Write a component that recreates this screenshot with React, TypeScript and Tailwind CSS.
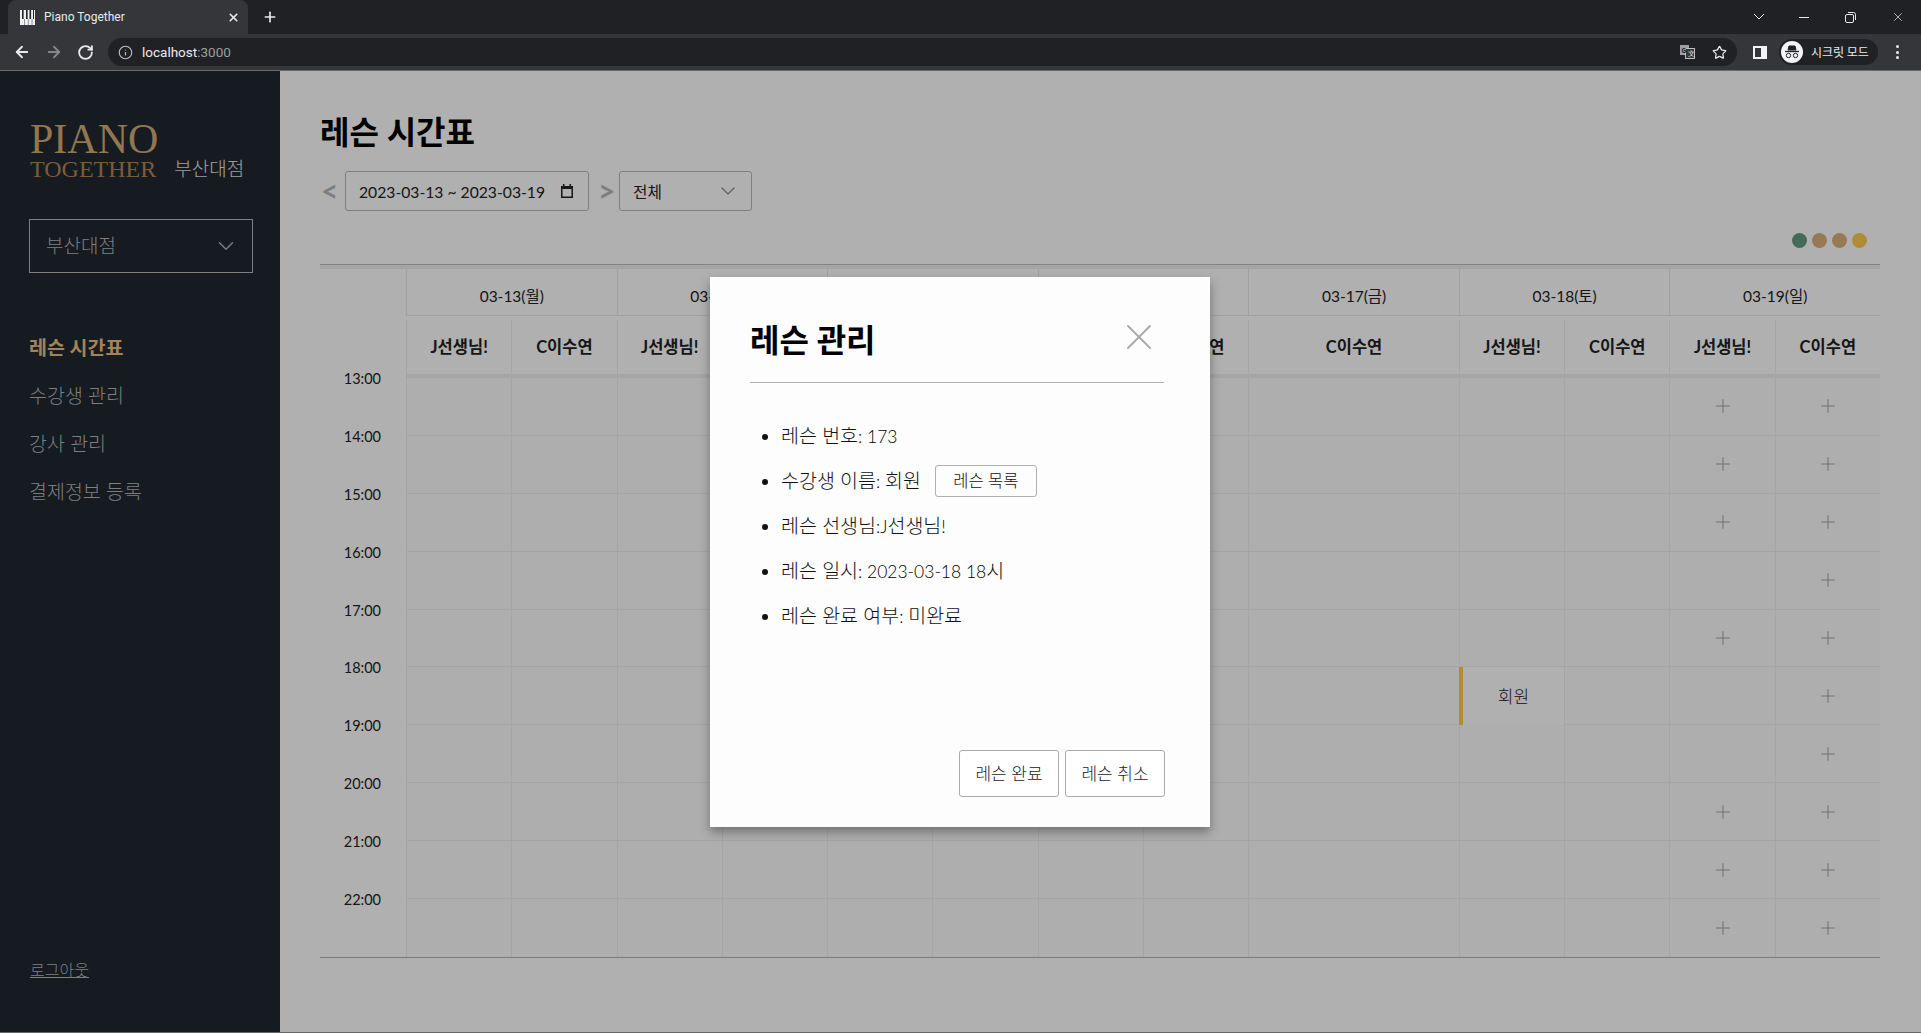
import { ArrowLeft, ArrowRight, ChevronDown, Info, Plus, RotateCw, Star, X } from "lucide-react"

const days = [
  { label: "03-13(월)", teachers: ["J선생님!", "C이수연"] },
  { label: "03-14(화)", teachers: ["J선생님!", "C이수연"] },
  { label: "03-15(수)", teachers: ["J선생님!", "C이수연"] },
  { label: "03-16(목)", teachers: ["J선생님!", "C이수연"] },
  { label: "03-17(금)", teachers: ["C이수연"] },
  { label: "03-18(토)", teachers: ["J선생님!", "C이수연"] },
  { label: "03-19(일)", teachers: ["J선생님!", "C이수연"] },
]

const hours = ["13:00", "14:00", "15:00", "16:00", "17:00", "18:00", "19:00", "20:00", "21:00", "22:00"]
const navItems = ["수강생 관리", "강사 관리", "결제정보 등록"]
const sundayJ = ["13:00", "14:00", "15:00", "17:00", "20:00", "21:00", "22:00"]

function PianoIcon() {
  return (
    <svg width="15" height="15" viewBox="0 0 15 15">
      <rect width="15" height="15" fill="#f1f1f1" />
      <path d="M2 0h1.6v9H2zM6 0h1.6v9H6zM9.5 0h1.6v9H9.5zM13 0h1v9h-1z" fill="#202124" />
      <path d="M4.6 9v6M8.3 9v6M12 9v6" stroke="#777" strokeWidth="0.8" />
    </svg>
  )
}

function BrowserChrome() {
  return (
    <div className="h-[71px] shrink-0 font-['Roboto',sans-serif] text-white">
      <div className="flex h-[34px] items-end bg-[#202124] pl-2">
        <div className="flex h-[34px] w-[240px] items-center rounded-t-lg bg-[#35363a] pl-3 pr-2">
          <PianoIcon />
          <span className="ml-[9px] text-xs text-[#e8eaed]">Piano Together</span>
          <X className="ml-auto h-[13px] w-[13px] text-[#e8eaed]" strokeWidth={3} />
        </div>
        <Plus className="mb-[9px] ml-[14px] h-4 w-4 text-[#e8eaed]" strokeWidth={2.5} />
        <div className="ml-auto flex h-[34px] items-center text-[#e8eaed]">
          <svg width="14" height="8" viewBox="0 0 14 8" fill="none" stroke="currentColor" className="mr-[33px]">
            <path d="M2 1l5 5 5-5" />
          </svg>
          <div className="mr-[36px] h-px w-[10px] bg-[#e8eaed]" />
          <svg width="11" height="11" viewBox="0 0 11 11" fill="none" stroke="currentColor" className="mr-[35px]">
            <rect x="0.5" y="2.5" width="8" height="8" rx="1.5" />
            <path d="M3 0.5h5.5a2 2 0 0 1 2 2V8" />
          </svg>
          <X className="mr-[16px] h-[14px] w-[14px]" strokeWidth={1.2} />
        </div>
      </div>
      <div className="flex h-[37px] items-center border-b border-[#6b6b6b] bg-[#35363a]">
        <ArrowLeft className="ml-[13px] h-[18px] w-[18px] text-[#e8eaed]" strokeWidth={2.4} />
        <ArrowRight className="ml-[14px] h-[18px] w-[18px] text-[#85878a]" strokeWidth={2.4} />
        <RotateCw className="ml-[14px] h-[17px] w-[17px] text-[#e8eaed]" strokeWidth={2.6} />
        <div className="ml-[14px] flex h-[28px] w-[1629px] items-center rounded-full bg-[#202124]">
          <Info className="ml-[10px] h-[15px] w-[15px] text-[#bdc1c6]" strokeWidth={1.8} />
          <span className="ml-[9px] text-[13.5px] text-[#e8eaed]">
            localhost<span className="text-[#9aa0a6]">:3000</span>
          </span>
          <svg width="15" height="14" viewBox="0 0 15 14" className="ml-auto mr-[17px]">
            <rect x="0" y="0" width="9" height="10" fill="#9aa0a6" />
            <rect x="5.5" y="3.5" width="9" height="10" fill="#35363a" stroke="#bdc1c6" />
            <text x="1.5" y="8" fontSize="7" fontWeight="700" fill="#202124">G</text>
            <text x="7.5" y="11" fontSize="7" fill="#e8eaed">文</text>
          </svg>
          <Star className="mr-[10px] h-[15px] w-[15px] text-[#e8eaed]" strokeWidth={2} />
        </div>
        <svg width="14" height="13" viewBox="0 0 14 13" className="ml-[16px]">
          <rect width="14" height="13" fill="#f1f3f4" />
          <rect x="2" y="2" width="6" height="9" fill="#35363a" />
        </svg>
        <div className="ml-[12px] flex h-[26px] w-[99px] items-center rounded-full bg-[#202124] pl-[2px]">
          <div className="flex h-[22px] w-[22px] items-center justify-center rounded-full bg-[#f1f3f4]">
            <svg width="16" height="14" viewBox="0 0 16 14" fill="none" stroke="#202124">
              <path d="M4 5l1-4h6l1 4z" fill="#202124" />
              <path d="M1 6.5h14" strokeWidth="1.3" />
              <circle cx="4.5" cy="10.5" r="2.2" />
              <circle cx="11.5" cy="10.5" r="2.2" />
            </svg>
          </div>
          <span className="ml-[8px] text-[12px] font-['Noto_Sans_CJK_KR',sans-serif] text-[#e8eaed]">시크릿 모드</span>
        </div>
        <div className="ml-[18px] flex flex-col gap-[2.5px]">
          <span className="h-[3px] w-[3px] rounded-full bg-[#e8eaed]" />
          <span className="h-[3px] w-[3px] rounded-full bg-[#e8eaed]" />
          <span className="h-[3px] w-[3px] rounded-full bg-[#e8eaed]" />
        </div>
      </div>
    </div>
  )
}

function Sidebar() {
  return (
    <aside className="flex w-[280px] shrink-0 flex-col bg-[#202731] pl-[29px]">
      <div className="mt-[51px] flex items-end">
        <div className="pl-px font-['Liberation_Serif',serif] text-[#d4ab74]">
          <div className="h-[35px] text-[42px] leading-[35px]">PIANO</div>
          <div className="h-[24px] text-[24px] leading-[24px] text-[#b58450]">TOGETHER</div>
        </div>
        <span className="ml-[16px] text-[19px] font-light leading-[24px] text-[#e4e4e4]">부산대점</span>
      </div>
      <div className="mt-[38px] flex h-[54px] w-[224px] items-center justify-between border border-[#b8b8b8] pl-[16px] pr-[13px] text-[19px] font-light text-[#b7b7b7]">
        부산대점
        <ChevronDown className="h-[26px] w-[26px] text-[#b7b7b7]" strokeWidth={1.3} />
      </div>
      <nav className="mt-[61px] flex flex-col gap-[20px] text-[19.5px] font-light leading-[28px] text-[#b7b7b7]">
        <a className="font-bold text-[#ebbe83]">레슨 시간표</a>
        {navItems.map((item) => (
          <a key={item}>{item}</a>
        ))}
      </nav>
      <a className="mb-[50px] mt-auto pl-px text-base font-light text-[#b7b7b7] underline">로그아웃</a>
    </aside>
  )
}

function Filters() {
  return (
    <div className="flex h-10 items-center text-[15.7px] text-[#222]">
      <span className="w-[25px] -translate-y-px pl-px text-[30px] font-bold leading-[32px] text-[#b9b9b9]">&lt;</span>
      <div className="flex h-10 w-[244px] items-center justify-between rounded-[3px] border border-[#b9b9b9] bg-white pl-[13px] pr-[14px] pt-[3px]">
        2023-03-13 ~ 2023-03-19
        <svg width="14" height="14" viewBox="0 0 14 14" className="-mt-[3px]">
          <path d="M3 0v2H1v12h12V2h-2V0H9.5v2h-5V0zM2.500 5h9v7.500h-9z" fill="#222" />
        </svg>
      </div>
      <span className="ml-[9px] w-[21px] -translate-y-px text-[30px] font-bold leading-[32px] text-[#b9b9b9]">&gt;</span>
      <div className="flex h-10 w-[133px] items-center justify-between rounded-[3px] border border-[#b9b9b9] bg-white pl-[13px] pr-[11px] pt-[3px]">
        전체
        <ChevronDown className="-mt-[3px] h-[24px] w-[24px] text-[#888]" strokeWidth={1.2} />
      </div>
    </div>
  )
}

function Timetable() {
  return (
    <div className="mt-[16px] text-[15.5px] text-[#222]">
      <div className="h-[5px] border-t border-[#c0c0c0] bg-[#f0f0f0]" />
      <div className="grid h-[47px] grid-cols-[86px_repeat(14,minmax(0,1fr))]">
        <div />
        {days.map((day) => (
          <div key={day.label} className="col-span-2 flex items-center justify-center border-b border-l border-[#e8e8e8] pt-[9px]">
            {day.label}
          </div>
        ))}
      </div>
      <div className="mt-[4px] grid h-[54px] grid-cols-[86px_repeat(14,minmax(0,1fr))] text-[16.5px] font-bold">
        <div />
        {days.map((day) =>
          day.teachers.map((teacher) => (
            <div
              key={day.label + teacher}
              className={
                day.teachers.length === 1
                  ? "col-span-2 flex items-center justify-center border-l border-[#f0f0f0]"
                  : "flex items-center justify-center border-l border-[#f0f0f0]"
              }
            >
              {teacher}
            </div>
          ))
        )}
      </div>
      <div className="ml-[86px] h-[4px] bg-[#f0f0f0]" />
      <div className="border-b border-[#b0b0b0]">
        {hours.map((hour, rowIndex) => (
          <div key={hour} className="grid h-[57.9px] grid-cols-[86px_repeat(14,minmax(0,1fr))]">
            <div className="h-5 -translate-y-[9px] pr-[25px] text-right text-[14.5px] leading-5">{hour}</div>
            {days.map((day, dayIndex) =>
              day.teachers.map((teacher, teacherIndex) => {
                const isSunday = dayIndex === 6
                const showPlus = isSunday && (teacherIndex === 1 || sundayJ.includes(hour))
                const isLesson = dayIndex === 5 && teacherIndex === 0 && hour === "18:00"
                const span = day.teachers.length === 1 ? "col-span-2 " : ""
                const bottom = rowIndex === hours.length - 1 ? "" : "border-b "
                return (
                  <div
                    key={day.label + teacher + hour}
                    className={span + bottom + "flex items-center justify-center border-l border-[#f0f0f0] bg-[#fcfcfc]"}
                  >
                    {showPlus && <Plus className="h-[22px] w-[22px] text-[#9a9a9a]" strokeWidth={1} />}
                    {isLesson && (
                      <div className="-mb-px -ml-px -mt-px flex h-[58px] w-[calc(100%+1px)] items-center justify-center border-l-4 border-[#ffcb51] bg-white pt-px text-[17px] font-light">
                        회원
                      </div>
                    )}
                  </div>
                )
              })
            )}
          </div>
        ))}
      </div>
    </div>
  )
}

function LessonModal() {
  const buttonClass = "h-[47px] w-[100px] rounded-[3px] border border-[#ababab] bg-white text-[17px] font-light text-[#222]"
  const latin = "text-[17.5px] text-black"
  return (
    <div className="absolute left-[710px] top-[206px] flex h-[550px] w-[500px] flex-col bg-[#fdfdfd] pl-[40px] pr-[46px] shadow-[0_5px_10px_rgba(0,0,0,0.35)]">
      <div className="flex h-[106px] justify-between border-b border-[#b0b0b0] pt-[40px]">
        <h2 className="text-[32px] font-bold leading-[46px] text-black">레슨 관리</h2>
        <X className="-mt-[2px] mr-[3px] h-[44px] w-[44px] text-[#a8a8a8]" strokeWidth={1} />
      </div>
      <ul className="mt-[30px] list-disc pl-[31px] text-[19.5px] font-light leading-[45px] text-[#111]">
        <li className="h-[45px]">
          레슨 번호<span className={latin}>: 173</span>
        </li>
        <li className="h-[45px]">
          수강생 이름<span className={latin}>: </span>회원
          <button className="ml-[14px] inline-block h-8 w-[102px] -translate-y-[2px] rounded-[3px] border border-[#b0b0b0] align-middle text-[16.5px] leading-none">
            레슨 목록
          </button>
        </li>
        <li className="h-[45px]">
          레슨 선생님<span className={latin}>:J</span>선생님<span className={latin}>!</span>
        </li>
        <li className="h-[45px]">
          레슨 일시<span className={latin}>: 2023-03-18 18</span>시
        </li>
        <li className="h-[45px]">
          레슨 완료 여부<span className={latin}>: </span>미완료
        </li>
      </ul>
      <div className="-mr-px mb-[30px] mt-auto flex justify-end gap-[6px]">
        <button className={buttonClass}>레슨 완료</button>
        <button className={buttonClass}>레슨 취소</button>
      </div>
    </div>
  )
}

export default function App() {
  return (
    <div className="flex h-[1033px] flex-col overflow-hidden font-['Lato','Noto_Sans_CJK_KR',sans-serif]">
      <BrowserChrome />
      <div className="relative flex h-[962px] border-b border-black/60 bg-white">
        <Sidebar />
        <main className="flex-1 pl-[40px] pr-[41px] pt-[42px]">
          <h1 className="mb-[20px] h-[38px] text-[32px] font-bold leading-[38px] text-black">레슨 시간표</h1>
          <Filters />
          <div className="mt-[22px] flex justify-end gap-[5px] pr-[13px]">
            <span className="h-[15px] w-[15px] rounded-full bg-[#619a85]" />
            <span className="h-[15px] w-[15px] rounded-full bg-[#dbb17b]" />
            <span className="h-[15px] w-[15px] rounded-full bg-[#dbb17b]" />
            <span className="h-[15px] w-[15px] rounded-full bg-[#ffcb51]" />
          </div>
          <Timetable />
        </main>
        <div className="absolute inset-0 bg-black/[0.31]" />
        <LessonModal />
      </div>
    </div>
  )
}
